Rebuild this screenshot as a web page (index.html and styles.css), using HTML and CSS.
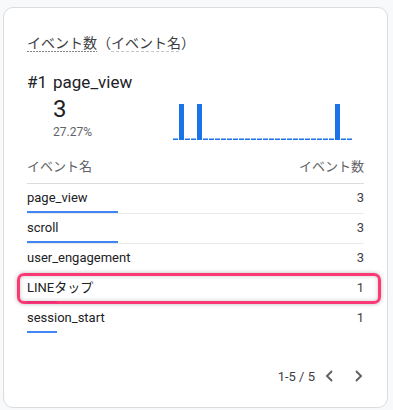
FILE: index.html
```html
<!DOCTYPE html>
<html lang="ja">
<head>
<meta charset="utf-8">
<link rel="stylesheet" href="styles.css">
</head>
<body>
<div class="card">
  <div class="title"><span class="u-dark">イベント数</span>（<span class="u-light">イベント名</span>）</div>
  <div class="top-item"><span class="rank">#1</span><span>page_view</span></div>
  <div class="metric">
    <div class="metric-left">
      <div class="metric-num">3</div>
      <div class="metric-pct">27.27%</div>
    </div>
    <svg class="spark" width="180" height="45" viewBox="0 0 180 45">
      <line x1="0" y1="44.3" x2="180" y2="44.3" stroke="#1a73e8" stroke-width="1.4" stroke-dasharray="5 1"/>
      <rect x="6" y="9" width="5" height="36" fill="#1a73e8"/>
      <rect x="24" y="9" width="5" height="36" fill="#1a73e8"/>
      <rect x="162" y="9" width="5" height="36" fill="#1a73e8"/>
    </svg>
  </div>
  <div class="thead"><span>イベント名</span><span>イベント数</span></div>
  <div class="row">
    <div class="name-cell"><div class="name">page_view</div><div class="bar" style="width:91px"></div></div>
    <div class="val">3</div>
  </div>
  <div class="row">
    <div class="name-cell"><div class="name">scroll</div><div class="bar" style="width:91px"></div></div>
    <div class="val">3</div>
  </div>
  <div class="row">
    <div class="name-cell"><div class="name">user_engagement</div><div class="bar" style="width:0px"></div></div>
    <div class="val">3</div>
  </div>
  <div class="row highlight">
    <div class="name-cell"><div class="name">LINEタップ</div><div class="bar" style="width:30px"></div></div>
    <div class="val">1</div>
  </div>
  <div class="row last">
    <div class="name-cell"><div class="name">session_start</div><div class="bar" style="width:30px"></div></div>
    <div class="val">1</div>
  </div>
  <div class="pager">
    <span class="range">1-5 / 5</span>
    <span class="pbtn"><svg width="14" height="24" viewBox="0 0 14 24"><polyline points="10,7 5,12 10,17" fill="none" stroke="#5f6368" stroke-width="2"/></svg></span>
    <span class="pbtn"><svg width="14" height="24" viewBox="0 0 14 24"><polyline points="6,7 11,12 6,17" fill="none" stroke="#5f6368" stroke-width="2"/></svg></span>
  </div>
</div>
</body>
</html>
```

FILE: styles.css
```css
html, body {
  margin: 0;
  padding: 0;
  background: #f8f9fa;
}
body {
  font-family: Roboto, "Noto Sans CJK JP", sans-serif;
  color: #202124;
}
.card {
  box-sizing: border-box;
  margin: 7px 0 0 3px;
  width: 385px;
  height: 401px;
  background: #fff;
  border: 1px solid #dadce0;
  border-radius: 10px;
  padding: 26px 23px 0 23px;
}
.title {
  font-size: 14px;
  line-height: 18px;
  color: #3c4043;
  white-space: nowrap;
}
.title span {
  display: inline-block;
}
.u-dark {
  background: repeating-linear-gradient(to right, #80868b 0 2px, transparent 2px 3px) left bottom / 100% 1px no-repeat;
}
.u-light {
  background: repeating-linear-gradient(to right, #c4c7c9 0 3px, transparent 3px 5px) left bottom / 100% 1px no-repeat;
}
.top-item {
  margin-top: 18px;
  font-size: 17px;
  line-height: 24px;
  display: flex;
  gap: 6px;
  color: #202124;
}
.metric {
  margin-top: 1px;
  display: flex;
  align-items: flex-start;
}
.metric-left {
  box-sizing: border-box;
  width: 146px;
  padding-left: 26px;
}
.metric-num {
  font-size: 24px;
  line-height: 28px;
  color: #202124;
}
.metric-pct {
  margin-top: 1px;
  font-size: 12px;
  line-height: 16px;
  color: #5f6368;
}
.spark {
  display: block;
}
.thead {
  margin-top: 17px;
  display: flex;
  justify-content: space-between;
  font-size: 13px;
  line-height: 20px;
  color: #5f6368;
  padding-bottom: 6px;
  border-bottom: 1px solid #dadce0;
}
.row {
  display: flex;
  justify-content: space-between;
  align-items: flex-start;
  padding-top: 4px;
  border-bottom: 1px solid #e8eaed;
  font-size: 13px;
  line-height: 20px;
}
.row.last {
  border-bottom: none;
}
.name-cell {
  flex: 1;
}
.name {
  font-weight: 400;
  color: #202124;
}
.bar {
  margin-top: 3px;
  height: 2px;
  background: #4285f4;
}
.val {
  color: #3c4043;
}
.highlight {
  position: relative;
}
.highlight::after {
  content: "";
  position: absolute;
  left: -10px;
  right: -17px;
  top: -1px;
  bottom: -1px;
  border: 3px solid rgba(250, 40, 105, 0.92);
  border-radius: 7px;
  box-shadow: 0 0 4px rgba(0, 0, 0, 0.28), inset 0 0 4px rgba(0, 0, 0, 0.22);
}
.pager {
  margin-top: 33px;
  display: flex;
  justify-content: flex-end;
  align-items: center;
  height: 20px;
  font-size: 13px;
  color: #3c4043;
}
.range {
  margin-right: 7px;
}
.pbtn {
  display: flex;
  width: 14px;
  height: 24px;
}
.pbtn + .pbtn {
  margin-left: 14px;
}
```
